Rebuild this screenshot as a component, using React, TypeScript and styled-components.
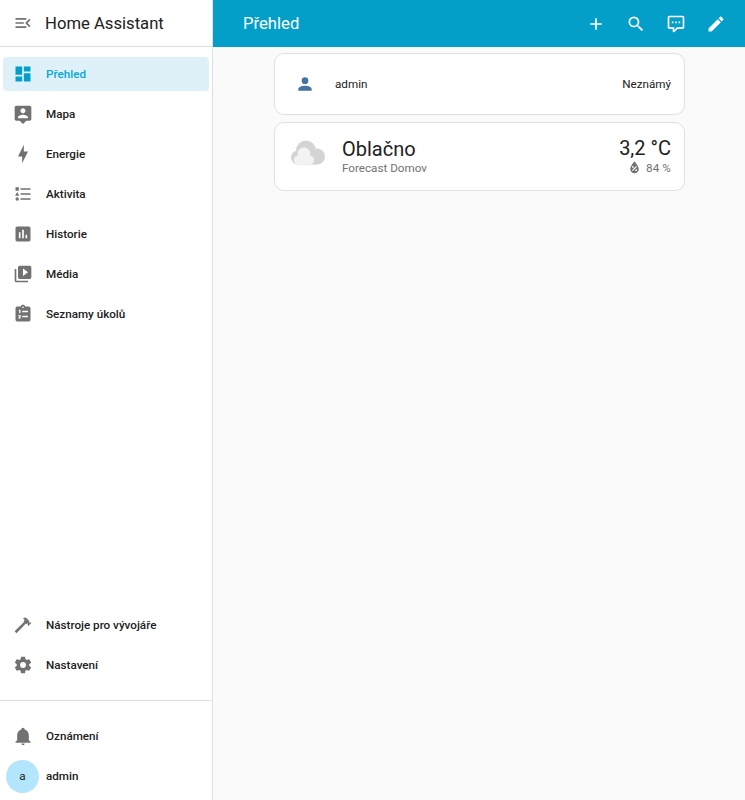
import React from 'react';
import styled, { createGlobalStyle } from 'styled-components';

const GlobalStyle = createGlobalStyle`
  html, body {
    margin: 0;
    padding: 0;
    height: 100%;
    background: #fafafa;
    font-family: Roboto, "Noto Sans", sans-serif;
    -webkit-font-smoothing: antialiased;
  }
`;

const Page = styled.div`
  display: flex;
  width: 745px;
  height: 800px;
  overflow: hidden;
`;

const Sidebar = styled.aside`
  display: flex;
  flex-direction: column;
  box-sizing: border-box;
  flex: 0 0 213px;
  height: 800px;
  background: #fff;
  border-right: 1px solid #e0e0e0;
`;

const SidebarHeader = styled.div`
  display: flex;
  align-items: center;
  box-sizing: border-box;
  height: 47px;
  border-bottom: 1px solid #e0e0e0;
  padding-left: 13px;
  gap: 12px;
`;

const SidebarTitle = styled.div`
  font-size: 16.67px;
  color: #212121;
  line-height: 46px;
  padding-top: 1px;
`;

const NavList = styled.nav`
  display: flex;
  flex-direction: column;
  gap: 6px;
  padding: 10px 3px 0;
`;

const NavItem = styled.div<{ $active?: boolean }>`
  display: flex;
  align-items: center;
  box-sizing: border-box;
  height: 34px;
  padding-left: 10px;
  gap: 13px;
  border-radius: 4px;
  background: ${(p) => (p.$active ? '#dff1f8' : 'transparent')};
  color: ${(p) => (p.$active ? '#03a9d6' : '#212121')};
  font-size: 11.67px;
  font-weight: 500;
`;

const NavIcon = styled.svg<{ $active?: boolean }>`
  flex: 0 0 20px;
  width: 20px;
  height: 20px;
  fill: ${(p) => (p.$active ? '#039fca' : '#727272')};
`;

const Spacer = styled.div`
  flex: 1;
`;

const BottomNav = styled(NavList)`
  padding-top: 0;
  padding-bottom: 18px;
`;

const Divider = styled.div`
  height: 1px;
  background: #e0e0e0;
`;

const UserList = styled(NavList)`
  padding-top: 18px;
  padding-bottom: 7px;
`;

const UserItem = styled(NavItem)`
  padding-left: 3px;
  gap: 7px;
`;

const Avatar = styled.div`
  display: flex;
  align-items: center;
  justify-content: center;
  flex: 0 0 33px;
  height: 33px;
  border-radius: 50%;
  background: #b3e5fc;
  font-size: 11.67px;
  font-weight: 400;
  color: #212121;
`;

const Main = styled.main`
  flex: 1;
  display: flex;
  flex-direction: column;
  min-width: 0;
`;

const TopBar = styled.header`
  display: flex;
  align-items: center;
  flex: 0 0 47px;
  background: #039fc9;
  color: #fff;
  padding-left: 30px;
  padding-right: 9px;
`;

const TopTitle = styled.div`
  flex: 1;
  font-size: 16.67px;
  color: #fff;
`;

const TopActions = styled.div`
  display: flex;
`;

const ActionButton = styled.button`
  display: flex;
  align-items: center;
  justify-content: center;
  width: 40px;
  height: 40px;
  padding: 0;
  border: 0;
  background: none;
`;

const ActionIcon = styled.svg`
  width: 20px;
  height: 20px;
  fill: #fff;
`;

const Cards = styled.section`
  display: flex;
  flex-direction: column;
  gap: 7px;
  width: 411px;
  box-sizing: border-box;
  margin: 6px 0 0 61px;
`;

const Card = styled.div`
  box-sizing: border-box;
  background: #fff;
  border: 1px solid #e0e0e0;
  border-radius: 10px;
`;

const EntityCard = styled(Card)`
  display: flex;
  align-items: center;
  height: 62px;
  padding: 0 13px 0 20px;
  font-size: 11.67px;
  color: #212121;
`;

const EntityIcon = styled.svg`
  flex: 0 0 20px;
  width: 20px;
  height: 20px;
  fill: #44739e;
  margin-right: 20px;
`;

const EntityName = styled.div`
  flex: 1;
`;

const WeatherCard = styled(Card)`
  display: flex;
  align-items: center;
  height: 69px;
  padding: 0 13px 0 16px;
`;

const CloudIcon = styled.svg`
  flex: 0 0 34px;
  width: 34px;
  height: 25px;
  margin: 0 17px 8px 0;
`;

const WeatherInfo = styled.div`
  flex: 1;
  padding-bottom: 4px;
`;

const WeatherState = styled.div`
  font-size: 20px;
  line-height: 26px;
  color: #212121;
`;

const WeatherName = styled.div`
  font-size: 11.67px;
  line-height: 12px;
  color: #727272;
`;

const WeatherValues = styled.div`
  text-align: right;
  padding-bottom: 4px;
`;

const Temperature = styled.div`
  font-size: 20px;
  line-height: 26px;
  color: #212121;
`;

const Humidity = styled.div`
  display: flex;
  align-items: center;
  justify-content: flex-end;
  gap: 3px;
  font-size: 11.67px;
  line-height: 12px;
  letter-spacing: 0.1px;
  color: #727272;
`;

const HumidityIcon = styled.svg`
  width: 17px;
  height: 17px;
  margin: -2px 0;
  fill: #727272;
`;

const icons = {
  menuOpen: 'M21,15.61L19.59,17L14.58,12L19.59,7L21,8.39L17.44,12L21,15.61M3,6H16V8H3V6M3,13V11H13V13H3M3,18V16H16V18H3Z',
  dashboard: 'M13,3V9H21V3M13,21H21V11H13M3,21H11V15H3M3,13H11V3H3V13Z',
  tooltipAccount: 'M20 2H4C2.89 2 2 2.89 2 4V18C2 19.11 2.9 20 4 20H8L12 24L16 20H20C21.11 20 22 19.11 22 18V4C22 2.89 21.11 2 20 2M12 5C13.66 5 15 6.34 15 8C15 9.66 13.66 11 12 11C10.34 11 9 9.66 9 8C9 6.34 10.34 5 12 5M18 17H6V16C6 14 10 12.9 12 12.9C14 12.9 18 14 18 16V17Z',
  bolt: 'M11,15H6L13,1V9H18L11,23V15Z',
  listType: 'M5,9.5L7.5,14H2.5L5,9.5M3,4H7V8H3V4M5,20A2,2 0 0,0 7,18A2,2 0 0,0 5,16A2,2 0 0,0 3,18A2,2 0 0,0 5,20M9,5V7H21V5H9M9,19H21V17H9V19M9,13H21V11H9V13Z',
  chartBox: 'M19 3H5C3.9 3 3 3.9 3 5V19C3 20.1 3.9 21 5 21H19C20.1 21 21 20.1 21 19V5C21 3.9 20.1 3 19 3M9 17H7V10H9V17M13 17H11V7H13V17M17 17H15V13H17V17Z',
  playBox: 'M4,6H2V20A2,2 0 0,0 4,22H18V20H4V6M20,2H8A2,2 0 0,0 6,4V16A2,2 0 0,0 8,18H20A2,2 0 0,0 22,16V4A2,2 0 0,0 20,2M12,14.5V5.5L18,10L12,14.5Z',
  clipboardList: 'M19,3H14.82C14.4,1.84 13.3,1 12,1C10.7,1 9.6,1.84 9.18,3H5A2,2 0 0,0 3,5V19A2,2 0 0,0 5,21H19A2,2 0 0,0 21,19V5A2,2 0 0,0 19,3M12,3A1,1 0 0,1 13,4A1,1 0 0,1 12,5A1,1 0 0,1 11,4A1,1 0 0,1 12,3M11,8H18V10H11V8M11,14H18V16H11V14M7,7H9V11H7.5V8.5H7V7M6.5,13.5H9.5V15L8,16.5H9.5V17.5H6.5V16.5L8,15H6.5V13.5Z',
  hammer: 'M2 19.63L13.43 8.2L12.72 7.5L14.14 6.07L12 3.89C13.2 2.7 15.09 2.7 16.27 3.89L19.87 7.5L18.45 8.91H21.29L22 9.62L18.45 13.21L17.74 12.5V9.62L16.27 11.04L15.56 10.33L4.13 21.76L2 19.63Z',
  cog: 'M12,15.5A3.5,3.5 0 0,1 8.5,12A3.5,3.5 0 0,1 12,8.5A3.5,3.5 0 0,1 15.5,12A3.5,3.5 0 0,1 12,15.5M19.43,12.97C19.47,12.65 19.5,12.33 19.5,12C19.5,11.67 19.47,11.34 19.43,11L21.54,9.37C21.73,9.22 21.78,8.95 21.66,8.73L19.66,5.27C19.54,5.05 19.27,4.96 19.05,5.05L16.56,6.05C16.04,5.66 15.5,5.32 14.87,5.07L14.5,2.42C14.46,2.18 14.25,2 14,2H10C9.75,2 9.54,2.18 9.5,2.42L9.13,5.07C8.5,5.32 7.96,5.66 7.44,6.05L4.95,5.05C4.73,4.96 4.46,5.05 4.34,5.27L2.34,8.73C2.21,8.95 2.27,9.22 2.46,9.37L4.57,11C4.53,11.34 4.5,11.67 4.5,12C4.5,12.33 4.53,12.65 4.57,12.97L2.46,14.63C2.27,14.78 2.21,15.05 2.34,15.27L4.34,18.73C4.46,18.95 4.73,19.03 4.95,18.95L7.44,17.94C7.96,18.34 8.5,18.68 9.13,18.93L9.5,21.58C9.54,21.82 9.75,22 10,22H14C14.25,22 14.46,21.82 14.5,21.58L14.87,18.93C15.5,18.67 16.04,18.34 16.56,17.94L19.05,18.95C19.27,19.03 19.54,18.95 19.66,18.73L21.66,15.27C21.78,15.05 21.73,14.78 21.54,14.63L19.43,12.97Z',
  bell: 'M21,19V20H3V19L5,17V11C5,7.9 7.03,5.17 10,4.29C10,4.19 10,4.1 10,4A2,2 0 0,1 12,2A2,2 0 0,1 14,4C14,4.1 14,4.19 14,4.29C16.97,5.17 19,7.9 19,11V17L21,19M14,21A2,2 0 0,1 12,23A2,2 0 0,1 10,21',
  plus: 'M19,13H13V19H11V13H5V11H11V5H13V11H19V13Z',
  magnify: 'M9.5,3A6.5,6.5 0 0,1 16,9.5C16,11.11 15.41,12.59 14.44,13.73L14.71,14H15.5L20.5,19L19,20.5L14,15.5V14.71L13.73,14.44C12.59,15.41 11.11,16 9.5,16A6.5,6.5 0 0,1 3,9.5A6.5,6.5 0 0,1 9.5,3M9.5,5C7,5 5,7 5,9.5C5,12 7,14 9.5,14C12,14 14,12 14,9.5C14,7 12,5 9.5,5Z',
  comment: 'M9,22A1,1 0 0,1 8,21V18H4A2,2 0 0,1 2,16V4C2,2.89 2.9,2 4,2H20A2,2 0 0,1 22,4V16A2,2 0 0,1 20,18H13.9L10.2,21.71C10,21.9 9.75,22 9.5,22V22H9M10,16V19.08L13.08,16H20V4H4V16H10M17,11H15V9H17V11M13,11H11V9H13V11M9,11H7V9H9V11Z',
  pencil: 'M20.71,7.04C21.1,6.65 21.1,6 20.71,5.63L18.37,3.29C18,2.9 17.35,2.9 16.96,3.29L15.12,5.12L18.87,8.87M3,17.25V21H6.75L17.81,9.93L14.06,6.18L3,17.25Z',
  account: 'M12,4A4,4 0 0,1 16,8A4,4 0 0,1 12,12A4,4 0 0,1 8,8A4,4 0 0,1 12,4M12,14C16.42,14 20,15.79 20,18V20H4V18C4,15.79 7.58,14 12,14Z',
  waterPercent: 'M12,3.25C12,3.25 6,10 6,14C6,17.32 8.69,20 12,20A6,6 0 0,0 18,14C18,10 12,3.25 12,3.25M14.47,9.97L15.53,11.03L9.53,17.03L8.47,15.97M9.75,10A1.25,1.25 0 0,1 11,11.25A1.25,1.25 0 0,1 9.75,12.5A1.25,1.25 0 0,1 8.5,11.25A1.25,1.25 0 0,1 9.75,10M14.25,14.5A1.25,1.25 0 0,1 15.5,15.75A1.25,1.25 0 0,1 14.25,17A1.25,1.25 0 0,1 13,15.75A1.25,1.25 0 0,1 14.25,14.5Z',
};

const topItems = [
  { label: 'Přehled', icon: icons.dashboard, active: true },
  { label: 'Mapa', icon: icons.tooltipAccount },
  { label: 'Energie', icon: icons.bolt },
  { label: 'Aktivita', icon: icons.listType },
  { label: 'Historie', icon: icons.chartBox },
  { label: 'Média', icon: icons.playBox },
  { label: 'Seznamy úkolů', icon: icons.clipboardList },
];

const bottomItems = [
  { label: 'Nástroje pro vývojáře', icon: icons.hammer },
  { label: 'Nastavení', icon: icons.cog },
];

const actions = [icons.plus, icons.magnify, icons.comment, icons.pencil];

const App: React.FC = () => {
  return (
    <Page>
      <GlobalStyle/>
      <Sidebar>
        <SidebarHeader>
          <NavIcon viewBox="0 0 24 24"><path d={icons.menuOpen}/></NavIcon>
          <SidebarTitle>Home Assistant</SidebarTitle>
        </SidebarHeader>
        <NavList>
          {topItems.map((e) => (
            <NavItem key={e.label} $active={e.active}>
              <NavIcon viewBox="0 0 24 24" $active={e.active}><path d={e.icon}/></NavIcon>
              <span>{e.label}</span>
            </NavItem>
          ))}
        </NavList>
        <Spacer/>
        <BottomNav>
          {bottomItems.map((e) => (
            <NavItem key={e.label}>
              <NavIcon viewBox="0 0 24 24"><path d={e.icon}/></NavIcon>
              <span>{e.label}</span>
            </NavItem>
          ))}
        </BottomNav>
        <Divider/>
        <UserList>
          <NavItem>
            <NavIcon viewBox="0 0 24 24"><path d={icons.bell}/></NavIcon>
            <span>Oznámení</span>
          </NavItem>
          <UserItem>
            <Avatar>a</Avatar>
            <span>admin</span>
          </UserItem>
        </UserList>
      </Sidebar>
      <Main>
        <TopBar>
          <TopTitle>Přehled</TopTitle>
          <TopActions>
            {actions.map((d) => (
              <ActionButton key={d}>
                <ActionIcon viewBox="0 0 24 24"><path d={d}/></ActionIcon>
              </ActionButton>
            ))}
          </TopActions>
        </TopBar>
        <Cards>
          <EntityCard>
            <EntityIcon viewBox="0 0 24 24"><path d={icons.account}/></EntityIcon>
            <EntityName>admin</EntityName>
            <span>Neznámý</span>
          </EntityCard>
          <WeatherCard>
            <CloudIcon viewBox="0 0 34 25">
              <g fill="#d4d4d4">
                <circle cx="15" cy="10.5" r="10"/>
                <circle cx="26" cy="16.5" r="8"/>
                <circle cx="7" cy="17.5" r="7"/>
                <rect x="7" y="14" width="19" height="10.5"/>
              </g>
              <g fill="#f3f3f3">
                <circle cx="13" cy="14" r="6.5"/>
                <circle cx="7.5" cy="20" r="4.5"/>
                <circle cx="18.5" cy="20" r="4.5"/>
                <rect x="7.5" y="17" width="11" height="7.5"/>
              </g>
            </CloudIcon>
            <WeatherInfo>
              <WeatherState>Oblačno</WeatherState>
              <WeatherName>Forecast Domov</WeatherName>
            </WeatherInfo>
            <WeatherValues>
              <Temperature>3,2 °C</Temperature>
              <Humidity>
                <HumidityIcon viewBox="0 0 24 24"><path d={icons.waterPercent}/></HumidityIcon>
                <span>84 %</span>
              </Humidity>
            </WeatherValues>
          </WeatherCard>
        </Cards>
      </Main>
    </Page>
  );
};

export default App;
